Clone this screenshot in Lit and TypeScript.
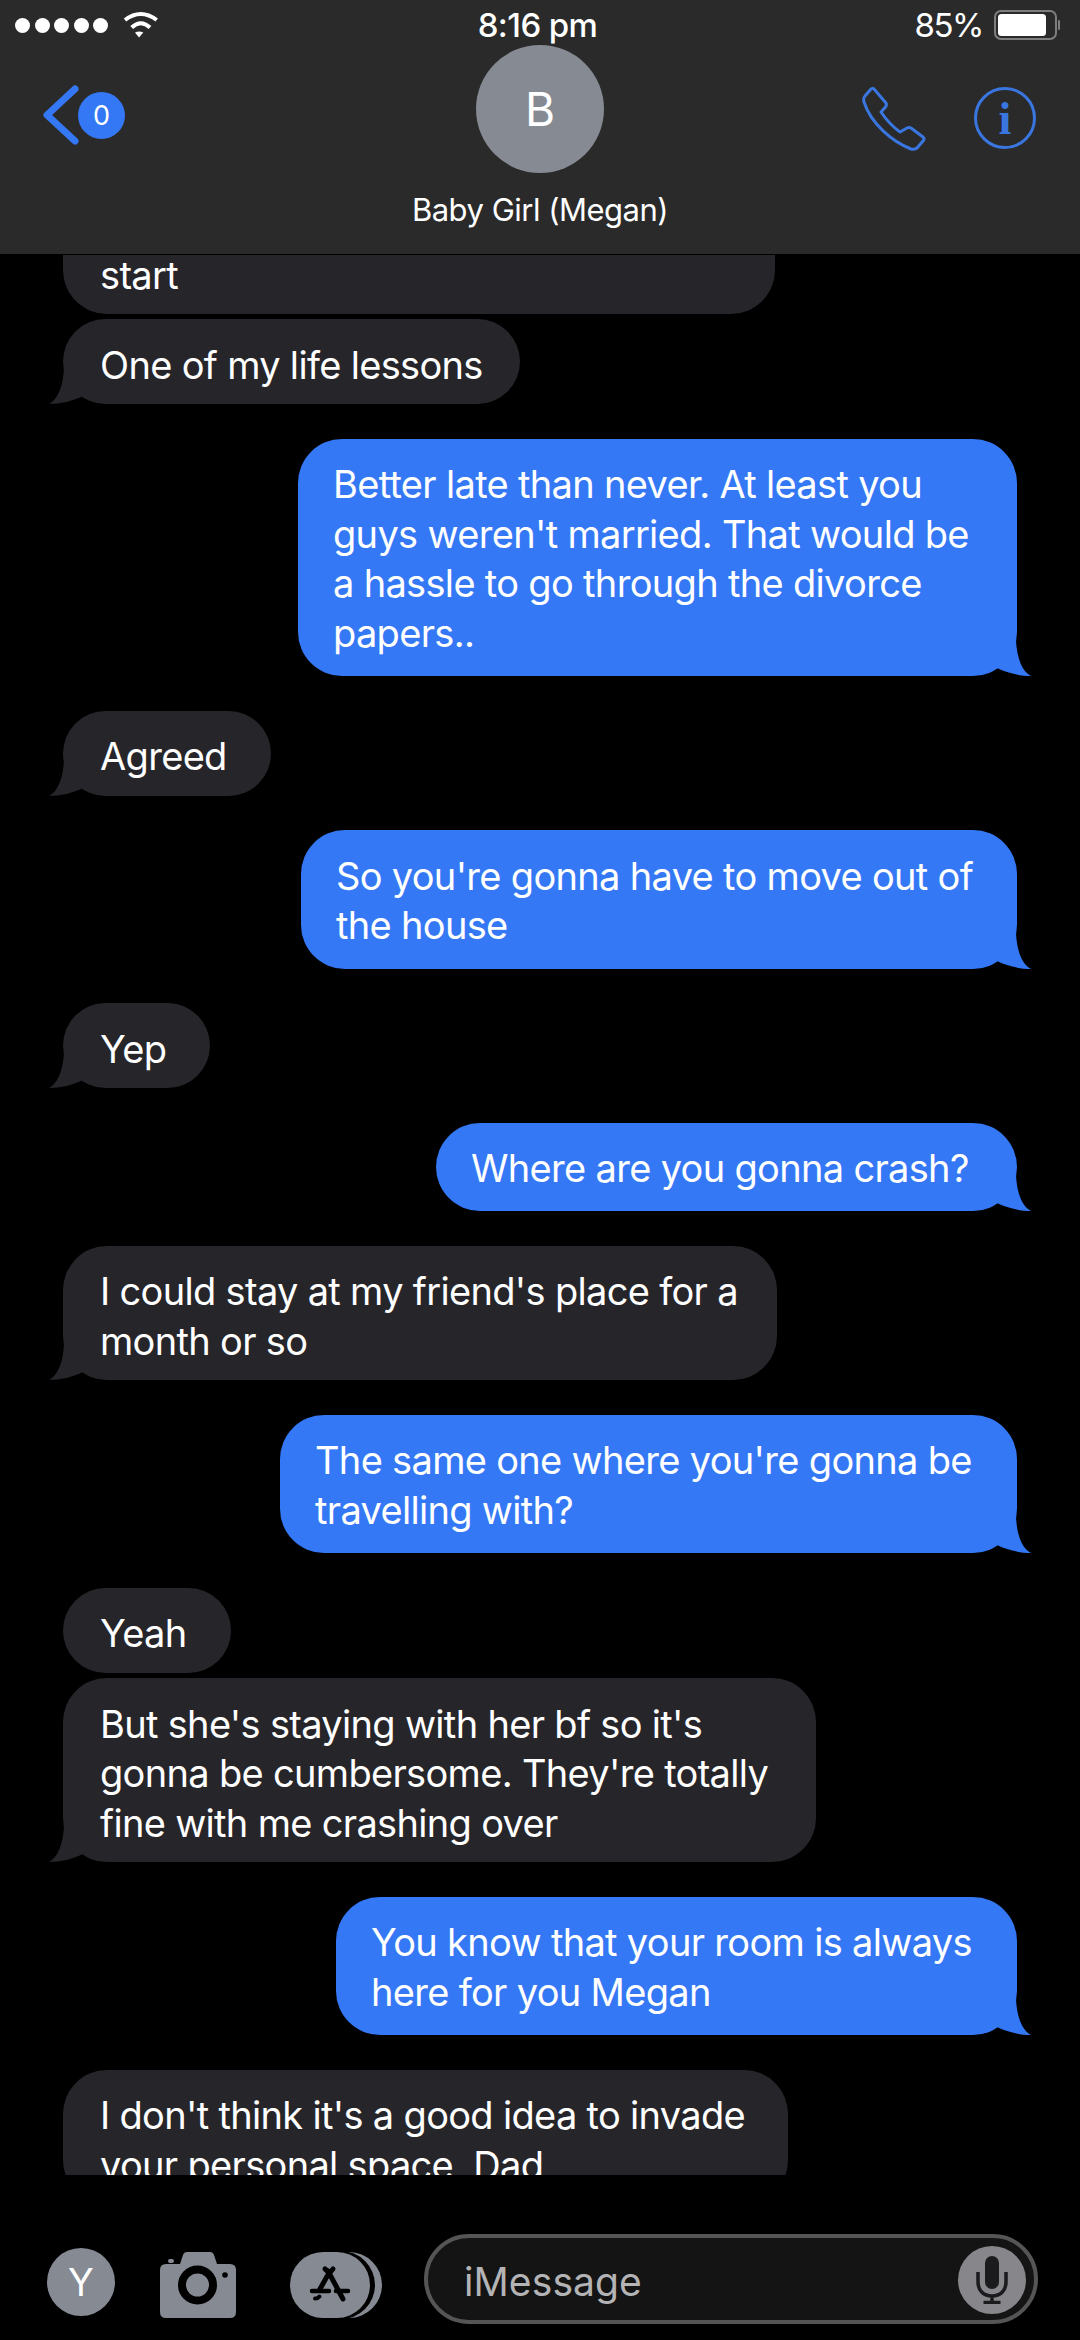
import { LitElement, html, css } from 'lit';
import { customElement } from 'lit/decorators.js';

interface Msg {
  lines: string[];
  width: number;
  out?: boolean;
  tail?: boolean;
  tight?: boolean;
  cut?: boolean;
}

const MESSAGES: Msg[] = [
  { lines: ['start'], width: 712, cut: true },
  { lines: ['One of my life lessons'], width: 457, tail: true, tight: true },
  {
    lines: ['Better late than never. At least you', "guys weren't married. That would be", 'a hassle to go through the divorce', 'papers..'],
    width: 719, out: true, tail: true,
  },
  { lines: ['Agreed'], width: 208, tail: true },
  { lines: ["So you're gonna have to move out of", 'the house'], width: 716, out: true, tail: true },
  { lines: ['Yep'], width: 147, tail: true },
  { lines: ['Where are you gonna crash?'], width: 581, out: true, tail: true },
  { lines: ["I could stay at my friend's place for a", 'month or so'], width: 714, tail: true },
  { lines: ["The same one where you're gonna be", 'travelling with?'], width: 737, out: true, tail: true },
  { lines: ['Yeah'], width: 168 },
  {
    lines: ["But she's staying with her bf so it's", "gonna be cumbersome. They're totally", 'fine with me crashing over'],
    width: 753, tail: true, tight: true,
  },
  { lines: ['You know that your room is always', 'here for you Megan'], width: 681, out: true, tail: true },
  { lines: ["I don't think it's a good idea to invade", 'your personal space, Dad'], width: 725 },
];

const tail = html`<svg class="tail" width="48" height="50" viewBox="-16 -48 48 50">
  <path d="M1-46C2-22-4-5-14 0C-3 0 10-3 20-8L30-30Z" />
</svg>`;

@customElement('app-root')
export class AppRoot extends LitElement {
  static styles = css`
    :host {
      display: flex;
      flex-direction: column;
      width: 1080px;
      height: 2340px;
      background: #000;
      color: #fff;
      font-family: Inter, 'Noto Sans', sans-serif;
      overflow: hidden;
    }

    header {
      height: 254px;
      background: #2a2a2a;
      flex: none;
      z-index: 1;
      position: relative;
    }
    .status {
      display: grid;
      grid-template-columns: 1fr auto 1fr;
      align-items: center;
      height: 50px;
      padding: 0 20px 0 15px;
      box-sizing: content-box;
    }
    .status-left { display: flex; align-items: center; gap: 15px; }
    .dots { display: flex; gap: 4.5px; }
    .dots i { width: 15px; height: 15px; border-radius: 50%; background: #fff; }
    .time { font-size: 33px; font-weight: 500; letter-spacing: -0.6px; }
    .status-right { display: flex; align-items: center; justify-content: flex-end; gap: 11px; }
    .pct { font-size: 33px; letter-spacing: -1.5px; }

    .nav {
      display: grid;
      grid-template-columns: 1fr auto 1fr;
      margin-top: -5px;
    }
    .back { display: flex; align-items: center; padding: 6px 0 0 42px; box-sizing: border-box; height: 134px; }
    .badge {
      width: 47px;
      height: 47px;
      margin-left: -2px;
      border-radius: 50%;
      background: #3478f6;
      display: flex;
      align-items: center;
      justify-content: center;
      font-size: 27px;
    }
    .contact { display: flex; flex-direction: column; align-items: center; }
    .avatar {
      width: 128px;
      height: 128px;
      border-radius: 50%;
      background: #858a93;
      display: flex;
      align-items: center;
      justify-content: center;
      font-size: 46px;
    }
    .name { margin-top: 17px; font-size: 31px; line-height: 40px; letter-spacing: -0.5px; }
    .actions { display: flex; align-items: flex-start; justify-content: flex-end; gap: 48px; padding: 42px 44px 0 0; }
    .info {
      width: 56px;
      height: 56px;
      border: 3.5px solid #3a76e0;
      border-radius: 50%;
      display: flex;
      align-items: center;
      justify-content: center;
      color: #3a76e0;
      font: bold 46px 'Liberation Serif', serif;
    }

    .list {
      flex: 1;
      margin-top: 1px;
      min-height: 0;
      overflow: hidden;
      display: flex;
      flex-direction: column;
      padding: 0 63px;
    }
    .bubble {
      flex: none;
      position: relative;
      box-sizing: border-box;
      margin-top: 34.6px;
      padding: 21.5px 0 13.5px 37px;
      border-radius: 44px;
      background: #26252a;
      font-size: 38px;
      line-height: 49.7px;
      letter-spacing: -0.68px;
      white-space: nowrap;
      fill: #26252a;
    }
    .bubble.out {
      align-self: flex-end;
      background: #3478f6;
      fill: #3478f6;
      padding: 21.5px 0 17.5px 35px;
    }
    .bubble.tight { margin-top: 5.5px; }
    .bubble.cut { margin-top: -104px; padding-top: 99.5px; }
    .tail { position: absolute; left: -16px; bottom: -2px; }
    .out .tail { left: auto; right: -16px; transform: scaleX(-1); }

    footer {
      flex: none;
      height: 165px;
      display: flex;
      align-items: flex-start;
      padding: 59px 42px 0 47px;
      box-sizing: border-box;
    }
    .me {
      width: 68px;
      height: 68px;
      margin-top: 14px;
      border-radius: 50%;
      background: #858a93;
      display: flex;
      align-items: center;
      justify-content: center;
      font-size: 38px;
    }
    .camera { margin: 18px 0 0 45px; }
    .store { margin: 17px 0 0 54px; }
    .input {
      margin-left: 42px;
      flex: 1;
      height: 90px;
      box-sizing: border-box;
      border: 4px solid #555;
      border-radius: 45px;
      background: #141414;
      display: flex;
      align-items: center;
      justify-content: space-between;
      padding: 0 8px 0 36px;
      color: #b4b4b6;
      font-size: 39px;
      letter-spacing: 0.1px;
    }
    .input span { padding-top: 5px; }
    .mic {
      width: 68px;
      height: 68px;
      margin-top: 1px;
      border-radius: 50%;
      background: #87878b;
      display: flex;
      align-items: center;
      justify-content: center;
    }
  `;

  render() {
    return html`
      <header>
        <div class="status">
          <div class="status-left">
            <div class="dots"><i></i><i></i><i></i><i></i><i></i></div>
            <svg width="36" height="28" viewBox="0 0 36 28" fill="none" stroke="#fff" stroke-width="4">
              <path d="M2 9Q17.700-3 33.700 9" />
              <path d="M8.700 16.500Q17.700 8 27 16.500" />
              <path d="M12 21.500Q16 19.500 20.300 21.500L16 26.500Z" fill="#fff" stroke="none" />
            </svg>
          </div>
          <div class="time">8:16 pm</div>
          <div class="status-right">
            <span class="pct">85%</span>
            <svg width="66" height="30" viewBox="0 0 66 30">
              <rect x="1" y="1" width="61" height="28" rx="6" fill="none" stroke="#7e7e7e" stroke-width="2" />
              <rect x="4" y="4" width="48" height="22" rx="3.500" fill="#fff" />
              <rect x="64" y="10" width="2" height="10" rx="1" fill="#7e7e7e" />
            </svg>
          </div>
        </div>
        <div class="nav">
          <div class="back">
            <svg width="38" height="60" viewBox="0 0 38 60" fill="none" stroke="#3478f6" stroke-width="7" stroke-linecap="round" stroke-linejoin="round">
              <path d="M33 4L5 30L33 56" />
            </svg>
            <span class="badge">0</span>
          </div>
          <div class="contact">
            <div class="avatar">B</div>
            <div class="name">Baby Girl (Megan)</div>
          </div>
          <div class="actions">
            <svg width="64" height="64" viewBox="-1 -1 64 64" fill="none" stroke="#3a76e0" stroke-width="3" stroke-linejoin="round">
              <path d="M11 1L23 15Q24 17 22.500 19L18 24Q26 36 37 44L44 40Q46 39 48 40L60 49Q62 51 60 53L54 60Q51 62 48 61C30 54 8 36 1 14Q0 10 2 8L8 1Q10 0 11 1Z" />
            </svg>
            <div class="info">i</div>
          </div>
        </div>
      </header>

      <main class="list">
        ${MESSAGES.map(
          (m) => html`
            <div
              class="bubble ${m.out ? 'out' : ''} ${m.tight ? 'tight' : ''} ${m.cut ? 'cut' : ''}"
              style="width:${m.width}px"
            >
              ${m.lines.map((l) => html`<div>${l}</div>`)} ${m.tail ? tail : ''}
            </div>
          `,
        )}
      </main>

      <footer>
        <div class="me">Y</div>
        <svg class="camera" width="76" height="66" viewBox="0 0 76 66">
          <path
            fill="#858a93"
            d="M6 12H20L23 3Q24 0 27 0H50Q53 0 54 3L57 12H70Q76 12 76 18V60Q76 66 70 66H6Q0 66 0 60V18Q0 12 6 12Z"
          />
          <circle cx="37.500" cy="33" r="15.500" fill="#858a93" stroke="#000" stroke-width="8" />
          <circle cx="65" cy="23" r="2.800" fill="#000" />
          <rect x="8" y="7" width="6" height="4" rx="2" fill="#858a93" />
        </svg>
        <svg class="store" width="92" height="68" viewBox="0 0 92 68">
          <rect x="12" y="1" width="80" height="66" rx="33" fill="#858a93" />
          <rect x="0" y="0" width="85" height="68" rx="34" fill="#000" />
          <rect x="0" y="1" width="80" height="66" rx="33" fill="#858a93" />
          <g stroke="#000" stroke-width="5" stroke-linecap="round" fill="none">
            <path d="M35 18L38.500 21M43 18L40.500 21" />
            <path d="M39.500 21L30 38M38 20L53 48" />
            <path d="M22 40H39M46 40H58" stroke-width="4.500" />
            <path d="M25 47.500Q28 47.500 29.500 45.500" stroke-width="4" />
          </g>
        </svg>
        <div class="input">
          <span>iMessage</span>
          <div class="mic">
            <svg width="32" height="48" viewBox="0 0 32 48" fill="none" stroke="#1b1b1d" stroke-width="3.500">
              <rect x="9" y="0" width="14" height="33" rx="7" fill="#1b1b1d" stroke="none" />
              <path d="M2 16V26C2 35 8 40 16 40C24 40 30 35 30 26V16M16 40V46M7.500 46.500H24.500" />
            </svg>
          </div>
        </div>
      </footer>
    `;
  }
}
